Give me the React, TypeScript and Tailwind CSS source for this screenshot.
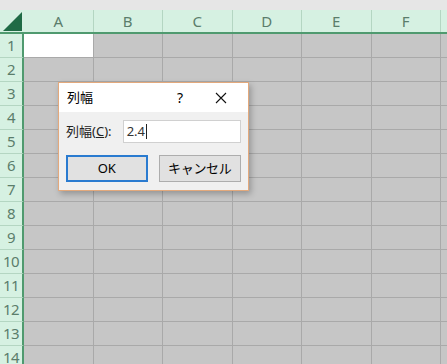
const cols = ['A', 'B', 'C', 'D', 'E', 'F', ''];
const rows = Array.from({ length: 14 }, (_, i) => i + 1);

const font = { fontFamily: '"Noto Sans", "Noto Sans CJK JP", sans-serif' };

function Dialog() {
  return (
    <div
      className="absolute left-[58px] top-[82px] w-[191px] h-[109px] border border-[#e3a97c] bg-[#f0f0f0] shadow-[2px_3px_6px_rgba(0,0,0,0.25)] flex flex-col"
      style={font}
    >
      {/* title bar */}
      <div className="h-[29px] bg-white flex items-center text-[13px] text-black">
        <span className="pl-[8px] w-[110px]">列幅</span>
        <span className="w-[22px] text-center text-[14px]">?</span>
        <span className="ml-[22px] w-[16px] flex justify-center">
          <svg width="12" height="12" viewBox="0 0 12 12">
            <path d="M1 1L11 11M11 1L1 11" stroke="#111" strokeWidth="1.1" />
          </svg>
        </span>
      </div>
      {/* body */}
      <div className="flex flex-col px-[7px] pt-[8px]">
        <div className="flex items-center h-[23px]">
          <span className="w-[57px] text-[13px] text-[#222]">
            列幅(<span className="underline">C</span>):
          </span>
          <div className="w-[119px] h-[23px] bg-white border border-[#d0d0d0] flex items-center pl-[3px] text-[13px] text-[#333]">
            2.4<span className="w-px h-[15px] bg-[#222] ml-px" />
          </div>
        </div>
        <div className="flex gap-[11px] mt-[12px]">
          <button className="w-[82px] h-[27px] bg-[#e1e1e1] border-2 border-[#2a7bd0] text-[13px] text-black">
            OK
          </button>
          <button className="w-[83px] h-[27px] bg-[#e1e1e1] border border-[#adadad] text-[13px] text-black tracking-[-0.3px]">
            キャンセル
          </button>
        </div>
      </div>
    </div>
  );
}

export default function App() {
  return (
    <div className="relative w-[447px] h-[364px] overflow-hidden bg-[#c6c6c6]" style={font}>
      <div className="h-[10px] bg-[#e6e6e6]" />
      {/* column header */}
      <div className="flex h-[24px] border-b-2 border-[#4f9a6f] bg-[#d6f1e2]">
        <div className="w-[24px] shrink-0 flex items-end justify-end pr-[2px] pb-[1px]">
          <svg width="19" height="19" viewBox="0 0 19 19">
            <path d="M19 0V19H0Z" fill="#1f6b45" />
          </svg>
        </div>
        {cols.map((c, i) => (
          <div
            key={i}
            className="w-[69.5px] shrink-0 border-r border-[#b4d6c2] flex items-center justify-center text-[15px] text-[#5b7d6b]"
          >
            {c}
          </div>
        ))}
      </div>
      {rows.map((r) => (
        <div key={r} className="flex h-[24px]">
          <div className="w-[24px] shrink-0 bg-[#d6f1e2] border-r-2 border-[#4f9a6f] border-b border-b-[#b4d6c2] flex items-center justify-center text-[15px] text-[#5b7d6b] tracking-[-0.5px]">
            {r}
          </div>
          {cols.map((c, i) => (
            <div
              key={i}
              className={`w-[69.5px] shrink-0 border-r border-b border-[#a9a9a9] ${
                r === 1 && i === 0 ? 'bg-white' : 'bg-[#c6c6c6]'
              }`}
            />
          ))}
        </div>
      ))}
      <Dialog />
    </div>
  );
}
